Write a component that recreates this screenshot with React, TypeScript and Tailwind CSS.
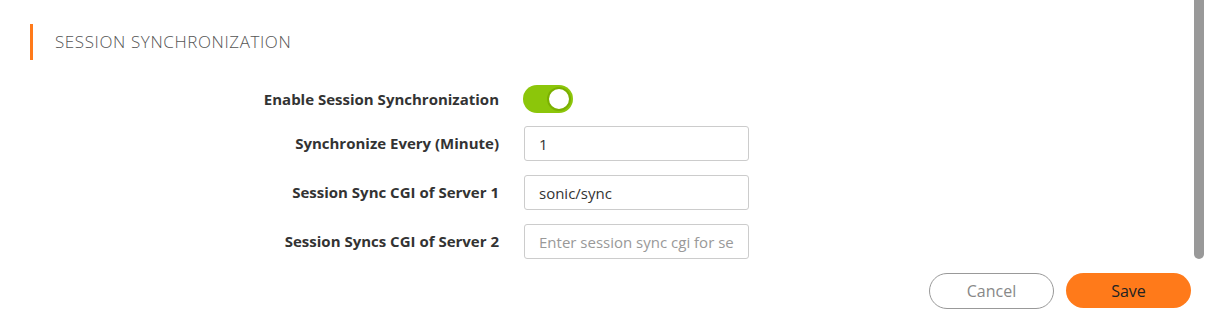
import { useState } from 'react';

const FONT = { fontFamily: '"Open Sans", "Noto Sans", sans-serif' };

const ROWS = [
  { label: 'Synchronize Every (Minute)', value: '1', placeholder: '' },
  { label: 'Session Sync CGI of Server 1', value: 'sonic/sync', placeholder: '' },
  { label: 'Session Syncs CGI of Server 2', value: '', placeholder: 'Enter session sync cgi for server 2' },
];

export default function App() {
  const [enabled, setEnabled] = useState(true);

  return (
    <div className="relative w-full h-[326px] bg-white overflow-hidden" style={FONT}>
      {/* header */}
      <div className="flex items-center pt-[24px] pl-[30px]">
        <div className="w-[3px] h-[36px] bg-[#ff7a1a]" />
        <h2 className="ml-[22px] text-[17px] font-light text-[#555] tracking-[0.6px]">SESSION SYNCHRONIZATION</h2>
      </div>

      {/* form */}
      <div className="mt-[25px]">
        <div className="flex items-center h-[28px]">
          <label className="w-[499px] text-right text-[15px] font-bold text-[#333]">Enable Session Synchronization</label>
          <button
            onClick={() => setEnabled(!enabled)}
            className="ml-[24px] w-[50px] h-[28px] rounded-full bg-[#8cc60a] flex items-center justify-end px-[2px]"
          >
            <span className="w-[24px] h-[24px] rounded-full bg-white border-[2px] border-[#7bb000]" />
          </button>
        </div>
        {ROWS.map((r, i) => (
          <div key={r.label} className={`flex items-center h-[35px] ${i === 0 ? 'mt-[13px]' : 'mt-[14px]'}`}>
            <label className="w-[499px] text-right text-[15px] font-bold text-[#333]">{r.label}</label>
            <input
              defaultValue={r.value}
              placeholder={r.placeholder}
              className="ml-[25px] w-[225px] h-[35px] border border-[#ccc] rounded-[3px] px-[14px] text-[15px] text-[#333] placeholder:text-[#999] outline-none"
              style={FONT}
            />
          </div>
        ))}
      </div>

      {/* actions */}
      <div className="flex justify-end gap-[12px] pr-[39px] mt-[14px]">
        <button className="w-[125px] h-[36px] rounded-full border border-[#999] text-[16px] text-[#888] bg-white">Cancel</button>
        <button className="w-[125px] h-[35px] rounded-full bg-[#ff7a1a] text-[16px] text-[#222]">Save</button>
      </div>

      {/* scrollbar */}
      <div className="absolute top-0 right-[26px] w-[10px] h-[259px] rounded-b-full bg-[#999]" />
    </div>
  );
}
